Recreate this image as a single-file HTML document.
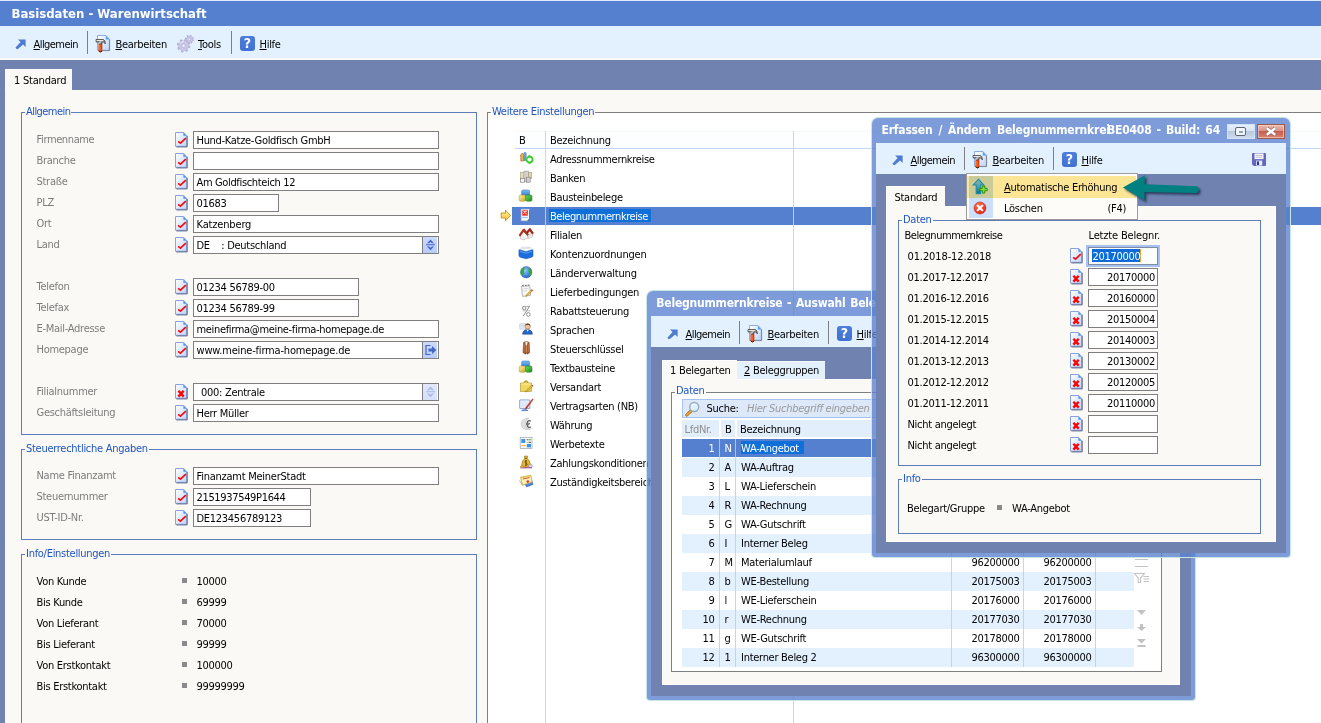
<!DOCTYPE html>
<html lang="de"><head><meta charset="utf-8"><title>Basisdaten - Warenwirtschaft</title>
<style>
html,body{margin:0;padding:0}body{width:1321px;height:723px;overflow:hidden;position:relative;background:#FAF9F5;font:11px/13px "DejaVu Sans Condensed","Liberation Sans",sans-serif;color:#000}
#w{position:absolute;left:0;top:0;width:1321px;height:723px;overflow:hidden;will-change:transform}
#w>div,#w>span,#w>svg{position:absolute}
.t{font:11px/13px "DejaVu Sans Condensed","Liberation Sans",sans-serif;letter-spacing:-0.28px;white-space:pre}
.tt{font:bold 13px/16px "DejaVu Sans Condensed","Liberation Sans",sans-serif;color:#fff;white-space:pre}
.td{font:bold 12px/16px "DejaVu Sans Condensed","Liberation Sans",sans-serif;color:#fff;white-space:pre;letter-spacing:-0.2px}
u{text-decoration:underline;text-underline-offset:1px}
.hlp{width:15px;height:15px;border-radius:3px;background:linear-gradient(#4D7DDB,#4171D2);color:#fff;font:bold 14px/15px "DejaVu Sans Condensed","Liberation Sans",sans-serif;text-align:center}
</style></head>
<body>
<div id="w">
<svg width="0" height="0" style="position:absolute"><defs><linearGradient id="dg2" x1="0" y1="0" x2="1" y2="1"><stop offset="0" stop-color="#FFFFFF"/><stop offset="1" stop-color="#BFD4F8"/></linearGradient></defs></svg>
<div style="left:0px;top:0px;width:1321px;height:26px;background:#5580D0;"></div>
<div style="left:0px;top:0px;width:1321px;height:1px;background:#DCEAFB;"></div>
<span class="tt" style="left:11.5px;top:6px;">Basisdaten - Warenwirtschaft</span>
<div style="left:0px;top:26px;width:1321px;height:34px;background:#E3F1FF;"></div>
<div style="left:0px;top:58px;width:1321px;height:2px;background:#FBFAF7;"></div>
<div style="left:0px;top:60px;width:1321px;height:30px;background:#7083B0;"></div>
<div style="left:0px;top:90px;width:5px;height:634px;background:#7083B0;"></div>
<svg style="left:15px;top:39px;" width="11" height="10" viewBox="0 0 11 10"><path d="M3 0.400H10.600V8L8.100 5.500L2.200 10.600L0.400 8.800L5.600 3Z" fill="#4F7BD0"/></svg>
<span class="t" style="left:33.5px;top:38px;letter-spacing:-0.56px;"><u>A</u>llgemein</span>
<div style="left:87px;top:31px;width:1px;height:23px;background:#7F7F7F;"></div>
<svg style="left:95px;top:35px;" width="16" height="18" viewBox="0 0 16 18"><path d="M2.500 0.500H11L14.400 4.300V15.300H2.500Z" fill="url(#dg2)" stroke="#86A2E0" stroke-width=".9"/><path d="M14.600 4.500V15.600H3" fill="none" stroke="#7F7F86" stroke-width=".9"/><path d="M10.800 0.700V4.500H14.400Z" fill="#4FA2F2"/>
<path d="M1.100 4.500H8.200Q10.300 4.800 10.300 8.800Q9.300 7 8.300 6.900H6.900V9H4.200V6.900H1.100Z" fill="#B4B4B4" stroke="#2E2E2E" stroke-width=".8" stroke-linejoin="round"/><path d="M1.600 5.400H8" stroke="#F4F4F4" stroke-width=".9"/><path d="M4.600 7V9" stroke="#E8E8E8" stroke-width=".8"/>
<path d="M3.900 9.200H7V16.300Q5.500 17.600 3.900 16.300Z" fill="#F0480E" stroke="#A02808" stroke-width=".6"/><path d="M4.900 10V15.500" stroke="#FFA040" stroke-width=".8"/><path d="M4 16.300Q5.500 17.500 7 16.300" stroke="#3A1A10" stroke-width=".9" fill="none"/></svg>
<span class="t" style="left:115.5px;top:38px;letter-spacing:-0.3px;"><u>B</u>earbeiten</span>
<svg style="left:176px;top:34px;" width="18" height="20" viewBox="0 0 18 20"><g fill="#C9C7E6"><circle cx="13.500" cy="5.400" r="3.700" fill="none" stroke="#B4B0D8" stroke-width="1.800" stroke-dasharray="1.450 1.450"/><circle cx="13.500" cy="5.400" r="3.200" stroke="#B0ACD4" stroke-width=".5"/><circle cx="7.600" cy="11.700" r="5.700" fill="none" stroke="#B4B0D8" stroke-width="2.200" stroke-dasharray="2.240 2.240"/><circle cx="7.600" cy="11.700" r="5" stroke="#B0ACD4" stroke-width=".5"/></g><circle cx="7.600" cy="11.700" r="1.700" fill="#F2F2FC" stroke="#A8A4CC" stroke-width=".6"/><circle cx="13.500" cy="5.400" r="1.100" fill="#F2F2FC" stroke="#A8A4CC" stroke-width=".5"/><path d="M4 9.500Q5.500 7.500 8 7.600" stroke="#EEEEFA" stroke-width="1" fill="none"/></svg>
<span class="t" style="left:198px;top:38px;"><u>T</u>ools</span>
<div style="left:231px;top:31px;width:1px;height:23px;background:#7F7F7F;"></div>
<div class="hlp" style="left:240px;top:36px">?</div>
<span class="t" style="left:259.5px;top:38px;"><u>H</u>ilfe</span>
<div style="left:5px;top:69px;width:67px;height:22px;background:#FAF9F5;border-left:1px solid #fff;border-top:1px solid #fff;box-sizing:border-box;"></div>
<span class="t" style="left:14px;top:74px;letter-spacing:-0.21px;">1 Standard</span>
<div style="left:21px;top:112px;width:456px;height:323px;border:1px solid #5F7CBA;box-sizing:border-box;"></div>
<span class="t" style="left:25px;top:105px;color:#1F55C2;letter-spacing:-0.56px;background:#FAF9F5;padding:0 1px;">Allgemein</span>
<div style="left:21px;top:449px;width:456px;height:91px;border:1px solid #5F7CBA;box-sizing:border-box;"></div>
<span class="t" style="left:25px;top:442px;color:#1F55C2;background:#FAF9F5;padding:0 1px;">Steuerrechtliche Angaben</span>
<div style="left:21px;top:554px;width:456px;height:187px;border:1px solid #5F7CBA;box-sizing:border-box;"></div>
<span class="t" style="left:25px;top:547px;color:#1F55C2;background:#FAF9F5;padding:0 1px;">Info/Einstellungen</span>
<span class="t" style="left:36.5px;top:133px;color:#7C7C7C;letter-spacing:-0.38px;">Firmenname</span>
<svg style="left:175px;top:132px;" width="14" height="16" viewBox="0 0 14 16"><path d="M0.500 0.500H8.700L11.600 3.400V14.300H0.500Z" fill="url(#dg2)" stroke="#8AA2DE"/><path d="M12.200 3.800V14.900H1.400" fill="none" stroke="#5C6890" stroke-width="1"/><path d="M8.400 0.600V3.800H11.600Z" fill="#4C96EA"/><path d="M3.100 9.300L5.500 11.200L10.800 6.100" fill="none" stroke="#F80C0C" stroke-width="1.700"/></svg>
<div style="left:193px;top:131px;width:246px;height:18px;background:#fff;border:1px solid #7F7F7F;box-sizing:border-box;"></div>
<span class="t" style="left:196.5px;top:134px;letter-spacing:-0.3px;">Hund-Katze-Goldfisch GmbH</span>
<span class="t" style="left:36.5px;top:154px;color:#7C7C7C;">Branche</span>
<svg style="left:175px;top:153px;" width="14" height="16" viewBox="0 0 14 16"><path d="M0.500 0.500H8.700L11.600 3.400V14.300H0.500Z" fill="url(#dg2)" stroke="#8AA2DE"/><path d="M12.200 3.800V14.900H1.400" fill="none" stroke="#5C6890" stroke-width="1"/><path d="M8.400 0.600V3.800H11.600Z" fill="#4C96EA"/><path d="M3.100 9.300L5.500 11.200L10.800 6.100" fill="none" stroke="#F80C0C" stroke-width="1.700"/></svg>
<div style="left:193px;top:152px;width:246px;height:18px;background:#fff;border:1px solid #7F7F7F;box-sizing:border-box;"></div>
<span class="t" style="left:36.5px;top:175px;color:#7C7C7C;">Straße</span>
<svg style="left:175px;top:174px;" width="14" height="16" viewBox="0 0 14 16"><path d="M0.500 0.500H8.700L11.600 3.400V14.300H0.500Z" fill="url(#dg2)" stroke="#8AA2DE"/><path d="M12.200 3.800V14.900H1.400" fill="none" stroke="#5C6890" stroke-width="1"/><path d="M8.400 0.600V3.800H11.600Z" fill="#4C96EA"/><path d="M3.100 9.300L5.500 11.200L10.800 6.100" fill="none" stroke="#F80C0C" stroke-width="1.700"/></svg>
<div style="left:193px;top:173px;width:246px;height:18px;background:#fff;border:1px solid #7F7F7F;box-sizing:border-box;"></div>
<span class="t" style="left:196.5px;top:176px;letter-spacing:-0.35px;">Am Goldfischteich 12</span>
<span class="t" style="left:36.5px;top:196px;color:#7C7C7C;">PLZ</span>
<svg style="left:175px;top:195px;" width="14" height="16" viewBox="0 0 14 16"><path d="M0.500 0.500H8.700L11.600 3.400V14.300H0.500Z" fill="url(#dg2)" stroke="#8AA2DE"/><path d="M12.200 3.800V14.900H1.400" fill="none" stroke="#5C6890" stroke-width="1"/><path d="M8.400 0.600V3.800H11.600Z" fill="#4C96EA"/><path d="M3.100 9.300L5.500 11.200L10.800 6.100" fill="none" stroke="#F80C0C" stroke-width="1.700"/></svg>
<div style="left:193px;top:194px;width:86px;height:18px;background:#fff;border:1px solid #7F7F7F;box-sizing:border-box;"></div>
<span class="t" style="left:196.5px;top:197px;">01683</span>
<span class="t" style="left:36.5px;top:217px;color:#7C7C7C;">Ort</span>
<svg style="left:175px;top:216px;" width="14" height="16" viewBox="0 0 14 16"><path d="M0.500 0.500H8.700L11.600 3.400V14.300H0.500Z" fill="url(#dg2)" stroke="#8AA2DE"/><path d="M12.200 3.800V14.900H1.400" fill="none" stroke="#5C6890" stroke-width="1"/><path d="M8.400 0.600V3.800H11.600Z" fill="#4C96EA"/><path d="M3.100 9.300L5.500 11.200L10.800 6.100" fill="none" stroke="#F80C0C" stroke-width="1.700"/></svg>
<div style="left:193px;top:215px;width:246px;height:18px;background:#fff;border:1px solid #7F7F7F;box-sizing:border-box;"></div>
<span class="t" style="left:196.5px;top:218px;letter-spacing:-0.16px;">Katzenberg</span>
<span class="t" style="left:36.5px;top:238px;color:#7C7C7C;">Land</span>
<svg style="left:175px;top:237px;" width="14" height="16" viewBox="0 0 14 16"><path d="M0.500 0.500H8.700L11.600 3.400V14.300H0.500Z" fill="url(#dg2)" stroke="#8AA2DE"/><path d="M12.200 3.800V14.900H1.400" fill="none" stroke="#5C6890" stroke-width="1"/><path d="M8.400 0.600V3.800H11.600Z" fill="#4C96EA"/><path d="M3.100 9.300L5.500 11.200L10.800 6.100" fill="none" stroke="#F80C0C" stroke-width="1.700"/></svg>
<div style="left:193px;top:236px;width:246px;height:18px;background:#fff;border:1px solid #7F7F7F;box-sizing:border-box;"></div>
<span class="t" style="left:196.5px;top:239px;">DE    : Deutschland</span>
<span class="t" style="left:36.5px;top:280px;color:#7C7C7C;">Telefon</span>
<svg style="left:175px;top:279px;" width="14" height="16" viewBox="0 0 14 16"><path d="M0.500 0.500H8.700L11.600 3.400V14.300H0.500Z" fill="url(#dg2)" stroke="#8AA2DE"/><path d="M12.200 3.800V14.900H1.400" fill="none" stroke="#5C6890" stroke-width="1"/><path d="M8.400 0.600V3.800H11.600Z" fill="#4C96EA"/><path d="M3.100 9.300L5.500 11.200L10.800 6.100" fill="none" stroke="#F80C0C" stroke-width="1.700"/></svg>
<div style="left:193px;top:278px;width:166px;height:18px;background:#fff;border:1px solid #7F7F7F;box-sizing:border-box;"></div>
<span class="t" style="left:196.5px;top:281px;">01234 56789-00</span>
<span class="t" style="left:36.5px;top:301px;color:#7C7C7C;">Telefax</span>
<svg style="left:175px;top:300px;" width="14" height="16" viewBox="0 0 14 16"><path d="M0.500 0.500H8.700L11.600 3.400V14.300H0.500Z" fill="url(#dg2)" stroke="#8AA2DE"/><path d="M12.200 3.800V14.900H1.400" fill="none" stroke="#5C6890" stroke-width="1"/><path d="M8.400 0.600V3.800H11.600Z" fill="#4C96EA"/><path d="M3.100 9.300L5.500 11.200L10.800 6.100" fill="none" stroke="#F80C0C" stroke-width="1.700"/></svg>
<div style="left:193px;top:299px;width:166px;height:18px;background:#fff;border:1px solid #7F7F7F;box-sizing:border-box;"></div>
<span class="t" style="left:196.5px;top:302px;">01234 56789-99</span>
<span class="t" style="left:36.5px;top:322px;color:#7C7C7C;">E-Mail-Adresse</span>
<svg style="left:175px;top:321px;" width="14" height="16" viewBox="0 0 14 16"><path d="M0.500 0.500H8.700L11.600 3.400V14.300H0.500Z" fill="url(#dg2)" stroke="#8AA2DE"/><path d="M12.200 3.800V14.900H1.400" fill="none" stroke="#5C6890" stroke-width="1"/><path d="M8.400 0.600V3.800H11.600Z" fill="#4C96EA"/><path d="M3.100 9.300L5.500 11.200L10.800 6.100" fill="none" stroke="#F80C0C" stroke-width="1.700"/></svg>
<div style="left:193px;top:320px;width:246px;height:18px;background:#fff;border:1px solid #7F7F7F;box-sizing:border-box;"></div>
<span class="t" style="left:196.5px;top:323px;letter-spacing:-0.33px;">meinefirma@meine-firma-homepage.de</span>
<span class="t" style="left:36.5px;top:343px;color:#7C7C7C;">Homepage</span>
<svg style="left:175px;top:342px;" width="14" height="16" viewBox="0 0 14 16"><path d="M0.500 0.500H8.700L11.600 3.400V14.300H0.500Z" fill="url(#dg2)" stroke="#8AA2DE"/><path d="M12.200 3.800V14.900H1.400" fill="none" stroke="#5C6890" stroke-width="1"/><path d="M8.400 0.600V3.800H11.600Z" fill="#4C96EA"/><path d="M3.100 9.300L5.500 11.200L10.800 6.100" fill="none" stroke="#F80C0C" stroke-width="1.700"/></svg>
<div style="left:193px;top:341px;width:246px;height:18px;background:#fff;border:1px solid #7F7F7F;box-sizing:border-box;"></div>
<span class="t" style="left:196.5px;top:344px;letter-spacing:-0.18px;">www.meine-firma-homepage.de</span>
<span class="t" style="left:36.5px;top:385px;color:#7C7C7C;">Filialnummer</span>
<svg style="left:175px;top:384px;" width="14" height="16" viewBox="0 0 14 16"><path d="M0.500 0.500H8.700L11.600 3.400V14.300H0.500Z" fill="url(#dg2)" stroke="#8AA2DE"/><path d="M12.200 3.800V14.900H1.400" fill="none" stroke="#5C6890" stroke-width="1"/><path d="M8.400 0.600V3.800H11.600Z" fill="#4C96EA"/><path d="M3.400 6.700L8.700 12.600M8.700 6.700L3.400 12.600" fill="none" stroke="#FA0606" stroke-width="2.400"/></svg>
<div style="left:193px;top:383px;width:246px;height:18px;background:#fff;border:1px solid #7F7F7F;box-sizing:border-box;"></div>
<span class="t" style="left:201.0px;top:386px;">000: Zentrale</span>
<span class="t" style="left:36.5px;top:406px;color:#7C7C7C;">Geschäftsleitung</span>
<svg style="left:175px;top:405px;" width="14" height="16" viewBox="0 0 14 16"><path d="M0.500 0.500H8.700L11.600 3.400V14.300H0.500Z" fill="url(#dg2)" stroke="#8AA2DE"/><path d="M12.200 3.800V14.900H1.400" fill="none" stroke="#5C6890" stroke-width="1"/><path d="M8.400 0.600V3.800H11.600Z" fill="#4C96EA"/><path d="M3.100 9.300L5.500 11.200L10.800 6.100" fill="none" stroke="#F80C0C" stroke-width="1.700"/></svg>
<div style="left:193px;top:404px;width:246px;height:18px;background:#fff;border:1px solid #7F7F7F;box-sizing:border-box;"></div>
<span class="t" style="left:196.5px;top:407px;">Herr Müller</span>
<span class="t" style="left:36.5px;top:469px;color:#7C7C7C;">Name Finanzamt</span>
<svg style="left:175px;top:468px;" width="14" height="16" viewBox="0 0 14 16"><path d="M0.500 0.500H8.700L11.600 3.400V14.300H0.500Z" fill="url(#dg2)" stroke="#8AA2DE"/><path d="M12.200 3.800V14.900H1.400" fill="none" stroke="#5C6890" stroke-width="1"/><path d="M8.400 0.600V3.800H11.600Z" fill="#4C96EA"/><path d="M3.100 9.300L5.500 11.200L10.800 6.100" fill="none" stroke="#F80C0C" stroke-width="1.700"/></svg>
<div style="left:193px;top:467px;width:246px;height:18px;background:#fff;border:1px solid #7F7F7F;box-sizing:border-box;"></div>
<span class="t" style="left:196.5px;top:470px;letter-spacing:-0.25px;">Finanzamt MeinerStadt</span>
<span class="t" style="left:36.5px;top:490px;color:#7C7C7C;">Steuernummer</span>
<svg style="left:175px;top:489px;" width="14" height="16" viewBox="0 0 14 16"><path d="M0.500 0.500H8.700L11.600 3.400V14.300H0.500Z" fill="url(#dg2)" stroke="#8AA2DE"/><path d="M12.200 3.800V14.900H1.400" fill="none" stroke="#5C6890" stroke-width="1"/><path d="M8.400 0.600V3.800H11.600Z" fill="#4C96EA"/><path d="M3.100 9.300L5.500 11.200L10.800 6.100" fill="none" stroke="#F80C0C" stroke-width="1.700"/></svg>
<div style="left:193px;top:488px;width:118px;height:18px;background:#fff;border:1px solid #7F7F7F;box-sizing:border-box;"></div>
<span class="t" style="left:196.5px;top:491px;letter-spacing:-0.34px;">2151937549P1644</span>
<span class="t" style="left:36.5px;top:511px;color:#7C7C7C;">UST-ID-Nr.</span>
<svg style="left:175px;top:510px;" width="14" height="16" viewBox="0 0 14 16"><path d="M0.500 0.500H8.700L11.600 3.400V14.300H0.500Z" fill="url(#dg2)" stroke="#8AA2DE"/><path d="M12.200 3.800V14.900H1.400" fill="none" stroke="#5C6890" stroke-width="1"/><path d="M8.400 0.600V3.800H11.600Z" fill="#4C96EA"/><path d="M3.100 9.300L5.500 11.200L10.800 6.100" fill="none" stroke="#F80C0C" stroke-width="1.700"/></svg>
<div style="left:193px;top:509px;width:118px;height:18px;background:#fff;border:1px solid #7F7F7F;box-sizing:border-box;"></div>
<span class="t" style="left:196.5px;top:512px;">DE123456789123</span>
<div style="left:422px;top:237px;width:1px;height:16px;background:#7F7F7F;"></div>
<div style="left:423px;top:237px;width:14px;height:16px;background:linear-gradient(#CBD9FC,#B9CCF8);"></div>
<svg style="left:425px;top:239px;" width="11" height="12" viewBox="0 0 11 12"><path d="M5.500 0.600L9 4.300H6.800L5.500 2.900L4.200 4.300H2Z M1 5.300H10V6.300H1Z M5.500 11.200L9 7.400H6.800L5.500 8.800L4.200 7.400H2Z" fill="#4468C8"/></svg>
<div style="left:422px;top:384px;width:1px;height:16px;background:#7F7F7F;"></div>
<div style="left:423px;top:384px;width:14px;height:16px;background:linear-gradient(#E2E9FD,#D6E0FB);"></div>
<svg style="left:425px;top:386px;" width="11" height="12" viewBox="0 0 11 12"><path d="M5.500 0.600L9 4.300H6.800L5.500 2.900L4.200 4.300H2Z M1 5.300H10V6.300H1Z M5.500 11.200L9 7.400H6.800L5.500 8.800L4.200 7.400H2Z" fill="#A9B9EA"/></svg>
<div style="left:422px;top:342px;width:1px;height:16px;background:#7F7F7F;"></div>
<div style="left:423px;top:342px;width:14px;height:16px;background:linear-gradient(#CBD9FC,#B9CCF8);"></div>
<svg style="left:425px;top:345px;" width="12" height="10" viewBox="0 0 12 10"><path d="M5.500 0.500H1V9.500H5.500" fill="none" stroke="#4468C8" stroke-width="1.200"/><path d="M3.500 3.600H7V1L11.300 5L7 9V6.400H3.500Z" fill="#4468C8"/></svg>
<span class="t" style="left:36.5px;top:575px;">Von Kunde</span>
<div style="left:182px;top:578px;width:5px;height:5px;background:#8A8A8A;"></div>
<span class="t" style="left:196.5px;top:575px;">10000</span>
<span class="t" style="left:36.5px;top:596px;">Bis Kunde</span>
<div style="left:182px;top:599px;width:5px;height:5px;background:#8A8A8A;"></div>
<span class="t" style="left:196.5px;top:596px;">69999</span>
<span class="t" style="left:36.5px;top:617px;">Von Lieferant</span>
<div style="left:182px;top:620px;width:5px;height:5px;background:#8A8A8A;"></div>
<span class="t" style="left:196.5px;top:617px;">70000</span>
<span class="t" style="left:36.5px;top:638px;">Bis Lieferant</span>
<div style="left:182px;top:641px;width:5px;height:5px;background:#8A8A8A;"></div>
<span class="t" style="left:196.5px;top:638px;">99999</span>
<span class="t" style="left:36.5px;top:659px;">Von Erstkontakt</span>
<div style="left:182px;top:662px;width:5px;height:5px;background:#8A8A8A;"></div>
<span class="t" style="left:196.5px;top:659px;">100000</span>
<span class="t" style="left:36.5px;top:680px;">Bis Erstkontakt</span>
<div style="left:182px;top:683px;width:5px;height:5px;background:#8A8A8A;"></div>
<span class="t" style="left:196.5px;top:680px;">99999999</span>
<div style="left:488px;top:113px;width:840px;height:620px;background:#fff;"></div>
<div style="left:487px;top:112px;width:840px;height:1px;background:#7F7F7F;"></div>
<div style="left:487px;top:112px;width:1px;height:620px;background:#7F7F7F;"></div>
<span class="t" style="left:491px;top:105px;color:#1F55C2;background:#FAF9F5;padding:0 1px;">Weitere Einstellungen</span>
<div style="left:515px;top:131px;width:806px;height:17px;background:#FDFEFF;"></div>
<div style="left:515px;top:131px;width:806px;height:1px;background:#FAF8F2;"></div>
<div style="left:515px;top:148px;width:806px;height:1px;background:#C3D6F8;"></div>
<div style="left:545px;top:131px;width:1px;height:600px;background:#C3D6F8;"></div>
<div style="left:793px;top:131px;width:1px;height:600px;background:#C3D6F8;"></div>
<span class="t" style="left:519px;top:134px;">B</span>
<span class="t" style="left:550px;top:134px;">Bezeichnung</span>
<span class="t" style="left:550px;top:153px;letter-spacing:-0.33px;">Adressnummernkreise</span>
<svg style="left:518px;top:150px;overflow:visible;" width="16" height="19" viewBox="0 0 16 19"><path d="M6.800 2.200Q8.200 2.200 8.200 4V10.500H5.800V4Q5.800 2.200 6.800 2.200Z" fill="#6AA8F0" stroke="#3A70C8" stroke-width=".5"/><path d="M4.200 3L6.400 6H5.600V11H2.800V6H2Z" fill="#F0B040" stroke="#9A6A18" stroke-width=".6"/><circle cx="11.500" cy="9.600" r="3" fill="#F4FFF0" stroke="#30D028" stroke-width="1.700"/><path d="M10.500 4.800L13.800 6.200L10.800 8Z" fill="#30D028"/><path d="M12.600 14.200L9.400 13L12.200 11.200Z" fill="#30D028"/></svg>
<span class="t" style="left:550px;top:172px;">Banken</span>
<svg style="left:518px;top:169px;overflow:visible;" width="16" height="19" viewBox="0 0 16 19"><rect x="2.600" y="3.600" width="3.600" height="7" fill="#E8DCA8" stroke="#9A9078" stroke-width=".5"/><rect x="10" y="3.600" width="3.800" height="6" fill="#E4D8A0" stroke="#9A9078" stroke-width=".5"/><rect x="6" y="2.200" width="4.200" height="10.600" fill="#E8E8E4" stroke="#808080" stroke-width=".6"/><path d="M7.400 3V12M8.800 3V12" stroke="#B8B8B4" stroke-width=".6"/><rect x="2.600" y="9.600" width="4" height="3.600" fill="#F8F8F8" stroke="#707070" stroke-width=".6"/><rect x="8.600" y="8.200" width="3.600" height="5" fill="#D0D0CC" stroke="#808080" stroke-width=".6"/></svg>
<span class="t" style="left:550px;top:191px;letter-spacing:-0.3px;">Bausteinbelege</span>
<svg style="left:518px;top:188px;overflow:visible;" width="16" height="19" viewBox="0 0 16 19"><defs><linearGradient id="bb" x1="0" y1="0" x2="0" y2="1"><stop offset="0" stop-color="#7CC0F4"/><stop offset="1" stop-color="#2470C8"/></linearGradient><linearGradient id="by" x1="0" y1="0" x2="1" y2="1"><stop offset="0" stop-color="#FFF4A0"/><stop offset="1" stop-color="#C8A428"/></linearGradient><linearGradient id="bg" x1="0" y1="0" x2="1" y2="1"><stop offset="0" stop-color="#70D860"/><stop offset="1" stop-color="#1C8A20"/></linearGradient></defs><rect x="3.600" y="2" width="8" height="6.500" rx="1.500" fill="url(#bb)" stroke="#2A68B8" stroke-width=".5"/><rect x="1.200" y="7" width="6.600" height="6.200" rx="1.400" fill="url(#by)" stroke="#A88A28" stroke-width=".5"/><rect x="7.600" y="7" width="6.400" height="6.200" rx="1.400" fill="url(#bg)" stroke="#1C7A20" stroke-width=".5"/></svg>
<div style="left:512px;top:207px;width:809px;height:18px;background:#5580D0;"></div>
<div style="left:545px;top:207px;width:1px;height:18px;background:#B4CBF6;"></div>
<div style="left:793px;top:207px;width:1px;height:18px;background:#B4CBF6;"></div>
<div style="left:549px;top:209px;width:102px;height:13px;background:#0F70DA;"></div>
<span class="t" style="left:550px;top:210px;color:#fff;letter-spacing:-0.43px;">Belegnummernkreise</span>
<svg style="left:500px;top:209px;" width="12" height="13" viewBox="0 0 12 13"><defs><linearGradient id="ya" x1="0" y1="0" x2="0" y2="1"><stop offset="0" stop-color="#FFF2A0"/><stop offset="1" stop-color="#F2C23C"/></linearGradient></defs><path d="M5.500 1.200L10.600 6.500L5.500 11.800V9H1.200V4H5.500Z" fill="url(#ya)" stroke="#C8961E" stroke-width="1"/></svg>
<svg style="left:518px;top:207px;overflow:visible;" width="16" height="19" viewBox="0 0 16 19"><path d="M3.200 2.200H11.400V11.800L9.400 13.800H3.200Z" fill="#FCFCFC" stroke="#B8C0D0" stroke-width=".6"/><path d="M11.600 3V12L9.600 14" fill="none" stroke="#50586A" stroke-width=".8"/><rect x="4.300" y="3.300" width="5.600" height="5.400" fill="#E8301C"/><path d="M5.400 4.600H8.800M5.400 6.600L7 5.400L8.800 7.400" stroke="#FCE8E4" stroke-width=".9" fill="none"/><rect x="4.300" y="9.800" width="5.600" height="1.300" fill="#9CC4F0"/></svg>
<span class="t" style="left:550px;top:229px;">Filialen</span>
<svg style="left:518px;top:226px;overflow:visible;" width="16" height="19" viewBox="0 0 16 19"><path d="M10.200 8.200L14.400 7.400V11L10.200 12.800Z" fill="#EEE8E2" stroke="#A89890" stroke-width=".4"/><path d="M7.600 7L11.200 2.600L12.400 2.400L15.600 7L14.400 8.200L11.600 5L9 8.200Z" fill="#A82818" stroke="#701408" stroke-width=".4"/><path d="M2.400 9L5.600 5.600L9.400 8.800V12.400L5.200 13.800L2.400 12.400Z" fill="#FAF8F6" stroke="#A89890" stroke-width=".5"/><path d="M0.900 9.200L4.800 3.400L6.400 2.800L10.600 8.400L9.400 9.600L5.600 5.600L2.200 10.200Z" fill="#B42C1C" stroke="#701408" stroke-width=".4"/><path d="M5.200 9.600V13.600" stroke="#C8BCB4" stroke-width=".5"/></svg>
<span class="t" style="left:550px;top:248px;letter-spacing:-0.18px;">Kontenzuordnungen</span>
<svg style="left:518px;top:245px;overflow:visible;" width="16" height="19" viewBox="0 0 16 19"><path d="M2.400 3.400L5 2.200L12.400 2.400L13.800 4.800L8 6.400L1.800 5Z" fill="#FCFCFC" stroke="#A8B4C8" stroke-width=".5"/><path d="M4 3.600L11.500 3.400" stroke="#C8D0DC" stroke-width=".6"/><path d="M0.900 5Q0.900 4.600 1.600 4.800L8 6.800L14.400 4.800Q15 4.600 15 5.200V10.400Q15 11.600 13.800 12.200L9 13.600Q8 13.800 7 13.600L2.200 12.200Q0.900 11.600 0.900 10.400Z" fill="#1C6CDC" stroke="#1450B0" stroke-width=".5"/><path d="M1.600 6.200L8 8.200L14.300 6.200" stroke="#6CB0F8" stroke-width=".8" fill="none"/></svg>
<span class="t" style="left:550px;top:267px;letter-spacing:-0.2px;">Länderverwaltung</span>
<svg style="left:518px;top:264px;overflow:visible;" width="16" height="19" viewBox="0 0 16 19"><defs><radialGradient id="gl" cx=".4" cy=".35" r=".7"><stop offset="0" stop-color="#8CC8FC"/><stop offset="1" stop-color="#1C64C8"/></radialGradient></defs><circle cx="8.200" cy="8.200" r="5.700" fill="url(#gl)" stroke="#2A5AA8" stroke-width=".5"/><path d="M3 6.400Q4.200 3.800 6.400 3.200Q7 4.800 5.800 6.400Q6.600 8.400 5.200 10.600Q3.600 12 3.200 10.200Q2.400 8.400 3 6.400Z" fill="#38A828"/><path d="M10.600 3.400Q13 4.600 13.600 7.200Q13.800 10 12 12.200Q10.600 11 11.200 9Q10 7.400 10.800 5.600Z" fill="#38A828"/></svg>
<span class="t" style="left:550px;top:286px;letter-spacing:-0.24px;">Lieferbedingungen</span>
<svg style="left:518px;top:283px;overflow:visible;" width="16" height="19" viewBox="0 0 16 19"><path d="M3.400 3.400L11.800 2.800L12.600 12.400L4.600 13.400Z" fill="#F6F6F4" stroke="#8C8C94" stroke-width=".6"/><path d="M4.200 2.600L5.800 2.200M7 2.400L8.600 2.200M9.800 2.200L11.200 2" stroke="#606068" stroke-width="1"/><path d="M5.400 5.800L10.400 5.400M5.600 7.800L9 7.600" stroke="#C4C4CC" stroke-width=".6"/><path d="M13.800 6.400L14.800 7.400L9.400 12.800L7.800 13.400L8.400 11.800Z" fill="#F4C430" stroke="#8C6A18" stroke-width=".5"/><path d="M13.800 6.400L14.800 7.400L14 8.200L13 7.200Z" fill="#E03020"/></svg>
<span class="t" style="left:550px;top:305px;">Rabattsteuerung</span>
<svg style="left:518px;top:302px;overflow:visible;" width="16" height="19" viewBox="0 0 16 19"><g fill="none" stroke="#8C8C8C" stroke-width="1"><ellipse cx="6.200" cy="6" rx="1.700" ry="1.800"/><ellipse cx="10.400" cy="12.400" rx="1.800" ry="1.900"/><path d="M11.400 4.600L5.200 14.200"/><path d="M4.400 8.800H12.200" stroke="#ACACAC" stroke-width=".7"/><path d="M8.200 4.400H12" stroke-width=".8"/></g></svg>
<span class="t" style="left:550px;top:324px;">Sprachen</span>
<svg style="left:518px;top:321px;overflow:visible;" width="16" height="19" viewBox="0 0 16 19"><path d="M1.800 2.800H8.400V8H1.800Z" fill="#F0F4FA" stroke="#98A8C0" stroke-width=".5"/><path d="M2.800 4.400H7M2.800 6H6" stroke="#B8C4D8" stroke-width=".6"/><circle cx="9.600" cy="5.400" r="2.700" fill="#F0C8A0" stroke="#8C5A30" stroke-width=".5"/><path d="M6.900 5Q7.200 2.400 9.800 2.500Q12.400 2.700 12.300 5.200Q11 3.800 9.400 4.200Q7.800 3.800 6.900 5Z" fill="#7A4A20"/><path d="M4.600 13.200Q4.800 8.600 9.600 8.600Q14.200 8.600 14.400 13.200Z" fill="#2468C8" stroke="#143C88" stroke-width=".5"/><path d="M8.400 8.800L9.600 10.800L10.800 8.800Z" fill="#F4F4F4"/></svg>
<span class="t" style="left:550px;top:343px;">Steuerschlüssel</span>
<svg style="left:518px;top:340px;overflow:visible;" width="16" height="19" viewBox="0 0 16 19"><path d="M5.600 2.600L7 1.800H9.800L11.200 2.600L11.600 12.600L9.800 14H9L8.400 12.600L7.800 14H7L5 12.600Z" fill="#A85830" stroke="#6A3014" stroke-width=".5"/><path d="M7.200 2H9.600L9 5.400H7.800Z" fill="#F4F0EC"/><path d="M8.400 5.400V12.400" stroke="#E4A070" stroke-width=".7"/><path d="M6.200 4V12M10.600 4V12" stroke="#C88050" stroke-width=".6"/></svg>
<span class="t" style="left:550px;top:362px;">Textbausteine</span>
<svg style="left:518px;top:359px;overflow:visible;" width="16" height="19" viewBox="0 0 16 19"><rect x="3.600" y="2" width="8" height="6.500" rx="1.500" fill="url(#bb)" stroke="#2A68B8" stroke-width=".5"/><rect x="1.200" y="7" width="6.600" height="6.200" rx="1.400" fill="url(#by)" stroke="#A88A28" stroke-width=".5"/><rect x="7.600" y="7" width="6.400" height="6.200" rx="1.400" fill="url(#bg)" stroke="#1C7A20" stroke-width=".5"/></svg>
<span class="t" style="left:550px;top:381px;">Versandart</span>
<svg style="left:518px;top:378px;overflow:visible;" width="16" height="19" viewBox="0 0 16 19"><path d="M2.400 5H6Q6 2.600 8 2.600Q10 2.600 10 5H13.400V13.400H2.400Z" fill="#F0D860" stroke="#A08420" stroke-width=".6"/><path d="M6.800 5Q6.800 3.400 8 3.400Q9.200 3.400 9.200 5" fill="none" stroke="#A08420" stroke-width=".6"/><path d="M3 6H12.800" stroke="#FFF4B0" stroke-width=".8"/><path d="M14.600 8.400L9.200 13.400L7.400 14L8.200 12.400L13.600 7.400Z" fill="#F4C838" stroke="#8C6A18" stroke-width=".5"/><path d="M13.600 7.400L14.600 8.400L15.200 7.800L14.200 6.800Z" fill="#E03020"/></svg>
<span class="t" style="left:550px;top:400px;">Vertragsarten (NB)</span>
<svg style="left:518px;top:397px;overflow:visible;" width="16" height="19" viewBox="0 0 16 19"><path d="M1.800 3H11.800V11.400H1.800Z" fill="#DCE8FC" stroke="#5070B8" stroke-width=".7"/><path d="M2.600 3.800H11V10.600H2.600Z" fill="none" stroke="#F4F8FF" stroke-width=".6"/><path d="M4.600 11.600H9V13.200H4.600Z" fill="#8CA4D8"/><path d="M3.400 13.600H10.200" stroke="#5070B8" stroke-width=".9"/><path d="M14.600 1.800L15.200 2.600L9 11L7.400 12L8 10.200Z" fill="#E83020" stroke="#8C1810" stroke-width=".4"/></svg>
<span class="t" style="left:550px;top:419px;">Währung</span>
<svg style="left:518px;top:416px;overflow:visible;" width="16" height="19" viewBox="0 0 16 19"><path d="M10.800 2.200Q5.400 1.800 3.600 6Q2.400 10 5.400 12.600Q8.400 14.800 12.600 13Q9.600 13.200 8 11Q6.400 8 7.800 5Q8.800 3 10.800 2.200Z" fill="#E0E0E0" stroke="#B0B0B0" stroke-width=".5"/><path d="M12.800 5.200Q10.800 4 9.400 5.600Q8.400 8 9.400 10.400Q10.800 12 13 11M8.200 7.200H11.800M8.200 8.800H11.400" fill="none" stroke="#505058" stroke-width="1.100"/></svg>
<span class="t" style="left:550px;top:438px;">Werbetexte</span>
<svg style="left:518px;top:435px;overflow:visible;" width="16" height="19" viewBox="0 0 16 19"><rect x="2.200" y="2.300" width="11.800" height="11.200" fill="#FCFDFF" stroke="#90A0B8" stroke-width=".7"/><rect x="3.300" y="4" width="4" height="4" fill="#3C94EC"/><rect x="8.600" y="4.200" width="1.600" height="1.100" fill="#E03828"/><rect x="10.400" y="4.200" width="2.600" height="1.100" fill="#48B838"/><rect x="8.600" y="6.800" width="1.800" height="1.100" fill="#E8C030"/><rect x="10.600" y="6.800" width="2.400" height="1.100" fill="#505868"/><rect x="3.300" y="10" width="4.400" height="1.200" fill="#E8C030"/><rect x="8.800" y="9" width="4.200" height="3.400" fill="#3C94EC"/></svg>
<span class="t" style="left:550px;top:457px;">Zahlungskonditionen</span>
<svg style="left:518px;top:454px;overflow:visible;" width="16" height="19" viewBox="0 0 16 19"><path d="M6.200 2.200L9.600 2L9 4.400Q12.400 6.800 12.200 10.400Q12 13.400 8 13.400Q3.800 13.400 3.800 10.400Q3.800 6.800 6.800 4.400Z" fill="#E4B830" stroke="#8C6810" stroke-width=".6"/><path d="M6.600 4.400H9.200" stroke="#7A5A10" stroke-width="1"/><path d="M9 7Q7 6.400 7 8Q7 9 8 9.200Q9.200 9.400 9.200 10.400Q9 11.600 7 11M8 6V12.200" fill="none" stroke="#5A4008" stroke-width=".8"/><ellipse cx="12.400" cy="12" rx="2" ry="1.800" fill="#D8D8DC" stroke="#808088" stroke-width=".5"/><path d="M2.400 13.800H14" stroke="#A038A8" stroke-width="1"/><ellipse cx="4" cy="12.800" rx="1.800" ry="1" fill="#E4C040" stroke="#8C6810" stroke-width=".4"/></svg>
<span class="t" style="left:550px;top:476px;">Zuständigkeitsbereiche</span>
<svg style="left:518px;top:473px;overflow:visible;" width="16" height="19" viewBox="0 0 16 19"><path d="M6 9.600L13.800 7.600L15 11.400L8.600 14Z" fill="#4C88E0" stroke="#2450A8" stroke-width=".5"/><path d="M2.600 4.200L12.800 2.200L14.200 9.200L4.400 12.200Z" fill="#FBF0B8" stroke="#A8882C" stroke-width=".6"/><path d="M2.400 4.200L12.800 2.200L13 3.400L2.800 5.600Z" fill="#E8C858"/><path d="M4.800 6L11.600 4.600" stroke="#D84830" stroke-width=".9"/><circle cx="9.800" cy="8.600" r="1.300" fill="#E03828"/><path d="M1.400 7.400L4.400 12.200" stroke="#A8882C" stroke-width=".6"/></svg>
<div style="left:647px;top:291px;width:548px;height:409px;background:rgba(90,130,207,.79);border-radius:6px 6px 3px 3px;box-shadow:0 0 0 1px #C6E6E6;"></div>
<div style="left:651px;top:316px;width:540px;height:31px;background:#E3F1FF;"></div>
<div style="left:651px;top:347px;width:540px;height:349px;background:#7083B0;"></div>
<span class="td" style="left:656.3px;top:295px;word-spacing:1px;">Belegnummernkreise - Auswahl Belegart</span>
<svg style="left:667px;top:329px;" width="11" height="10" viewBox="0 0 11 10"><path d="M3 0.400H10.600V8L8.100 5.500L2.200 10.600L0.400 8.800L5.600 3Z" fill="#4F7BD0"/></svg>
<span class="t" style="left:685.5px;top:328px;letter-spacing:-0.56px;"><u>A</u>llgemein</span>
<div style="left:739px;top:321px;width:1px;height:23px;background:#7F7F7F;"></div>
<svg style="left:747px;top:325px;" width="16" height="18" viewBox="0 0 16 18"><path d="M2.500 0.500H11L14.400 4.300V15.300H2.500Z" fill="url(#dg2)" stroke="#86A2E0" stroke-width=".9"/><path d="M14.600 4.500V15.600H3" fill="none" stroke="#7F7F86" stroke-width=".9"/><path d="M10.800 0.700V4.500H14.400Z" fill="#4FA2F2"/>
<path d="M1.100 4.500H8.200Q10.300 4.800 10.300 8.800Q9.300 7 8.300 6.900H6.900V9H4.200V6.900H1.100Z" fill="#B4B4B4" stroke="#2E2E2E" stroke-width=".8" stroke-linejoin="round"/><path d="M1.600 5.400H8" stroke="#F4F4F4" stroke-width=".9"/><path d="M4.600 7V9" stroke="#E8E8E8" stroke-width=".8"/>
<path d="M3.900 9.200H7V16.300Q5.500 17.600 3.900 16.300Z" fill="#F0480E" stroke="#A02808" stroke-width=".6"/><path d="M4.900 10V15.500" stroke="#FFA040" stroke-width=".8"/><path d="M4 16.300Q5.500 17.500 7 16.300" stroke="#3A1A10" stroke-width=".9" fill="none"/></svg>
<span class="t" style="left:767.5px;top:328px;letter-spacing:-0.3px;"><u>B</u>earbeiten</span>
<div style="left:828px;top:321px;width:1px;height:23px;background:#7F7F7F;"></div>
<div class="hlp" style="left:837px;top:326px">?</div>
<span class="t" style="left:856.5px;top:328px;"><u>H</u>ilfe</span>
<div style="left:662px;top:379px;width:518px;height:306px;background:#FAF9F5;border:1px solid #fff;box-sizing:border-box;"></div>
<div style="left:662px;top:360px;width:75px;height:20px;background:#FAF9F5;border-left:1px solid #fff;border-top:1px solid #fff;box-sizing:border-box;"></div>
<span class="t" style="left:670px;top:364px;">1 Belegarten</span>
<div style="left:737px;top:361px;width:88px;height:18px;background:#E3F1FF;border-top:1px solid #F4F9FF;box-sizing:border-box;"></div>
<span class="t" style="left:744px;top:364px;"><u>2</u> Beleggruppen</span>
<div style="left:671px;top:392px;width:491px;height:280px;background:#fff;border:1px solid #7F7F7F;box-sizing:border-box;"></div>
<span class="t" style="left:675px;top:384px;color:#1F55C2;background:linear-gradient(#FAF9F5 8px,#fff 8px);padding:0 1px;">Daten</span>
<div style="left:682px;top:399px;width:452px;height:19px;background:#DDE8F8;border:1px solid #A6C2F0;box-sizing:border-box;"></div>
<svg style="left:685px;top:401px;" width="16" height="16" viewBox="0 0 16 16"><path d="M6.300 9.700L1.800 14" stroke="#8A5A1A" stroke-width="3" stroke-linecap="round"/><path d="M6.300 9.700L1.800 14" stroke="#F2A030" stroke-width="1.800" stroke-linecap="round"/><circle cx="9.200" cy="6" r="4.500" fill="#DDF2FF" stroke="#9AA8BC" stroke-width="1.400"/><path d="M6.800 4.500Q8.500 2.600 11 3.600" stroke="#fff" stroke-width="1.200" fill="none"/></svg>
<span class="t" style="left:706.5px;top:402px;">Suche:</span>
<span class="t" style="left:747px;top:402px;color:#9A9A9A;font-style:italic;">Hier Suchbegriff eingeben</span>
<div style="left:682px;top:420px;width:452px;height:17px;background:#E3EEFC;"></div>
<span class="t" style="left:684.5px;top:423px;color:#8E8E8E;">LfdNr.</span>
<span class="t" style="left:725px;top:423px;">B</span>
<span class="t" style="left:740px;top:423px;">Bezeichnung</span>
<div style="left:682px;top:439px;width:452px;height:18px;background:#5580D0;"></div>
<div style="left:741px;top:441px;width:63px;height:13px;background:#0F70DA;"></div>
<span class="t" style="left:684px;top:442px;width:30.5px;text-align:right;color:#fff;">1</span>
<span class="t" style="left:724.5px;top:442px;color:#fff;">N</span>
<span class="t" style="left:741px;top:442px;color:#fff;">WA-Angebot</span>
<span class="t" style="left:960px;top:442px;width:59.5px;text-align:right;color:#fff;">20170000</span>
<span class="t" style="left:1032px;top:442px;width:59.5px;text-align:right;color:#fff;">20170000</span>
<div style="left:682px;top:458px;width:452px;height:19px;background:#E3F1FF;"></div>
<span class="t" style="left:684px;top:461px;width:30.5px;text-align:right;">2</span>
<span class="t" style="left:724.5px;top:461px;">A</span>
<span class="t" style="left:741px;top:461px;">WA-Auftrag</span>
<span class="t" style="left:960px;top:461px;width:59.5px;text-align:right;">20171000</span>
<span class="t" style="left:1032px;top:461px;width:59.5px;text-align:right;">20171000</span>
<span class="t" style="left:684px;top:480px;width:30.5px;text-align:right;">3</span>
<span class="t" style="left:724.5px;top:480px;">L</span>
<span class="t" style="left:741px;top:480px;">WA-Lieferschein</span>
<span class="t" style="left:960px;top:480px;width:59.5px;text-align:right;">20172000</span>
<span class="t" style="left:1032px;top:480px;width:59.5px;text-align:right;">20172000</span>
<div style="left:682px;top:496px;width:452px;height:19px;background:#E3F1FF;"></div>
<span class="t" style="left:684px;top:499px;width:30.5px;text-align:right;">4</span>
<span class="t" style="left:724.5px;top:499px;">R</span>
<span class="t" style="left:741px;top:499px;">WA-Rechnung</span>
<span class="t" style="left:960px;top:499px;width:59.5px;text-align:right;">20173000</span>
<span class="t" style="left:1032px;top:499px;width:59.5px;text-align:right;">20173000</span>
<span class="t" style="left:684px;top:518px;width:30.5px;text-align:right;">5</span>
<span class="t" style="left:724.5px;top:518px;">G</span>
<span class="t" style="left:741px;top:518px;">WA-Gutschrift</span>
<span class="t" style="left:960px;top:518px;width:59.5px;text-align:right;">20174000</span>
<span class="t" style="left:1032px;top:518px;width:59.5px;text-align:right;">20174000</span>
<div style="left:682px;top:534px;width:452px;height:19px;background:#E3F1FF;"></div>
<span class="t" style="left:684px;top:537px;width:30.5px;text-align:right;">6</span>
<span class="t" style="left:724.5px;top:537px;">I</span>
<span class="t" style="left:741px;top:537px;">Interner Beleg</span>
<span class="t" style="left:960px;top:537px;width:59.5px;text-align:right;">96100000</span>
<span class="t" style="left:1032px;top:537px;width:59.5px;text-align:right;">96100000</span>
<span class="t" style="left:684px;top:556px;width:30.5px;text-align:right;">7</span>
<span class="t" style="left:724.5px;top:556px;">M</span>
<span class="t" style="left:741px;top:556px;">Materialumlauf</span>
<span class="t" style="left:960px;top:556px;width:59.5px;text-align:right;">96200000</span>
<span class="t" style="left:1032px;top:556px;width:59.5px;text-align:right;">96200000</span>
<div style="left:682px;top:572px;width:452px;height:19px;background:#E3F1FF;"></div>
<span class="t" style="left:684px;top:575px;width:30.5px;text-align:right;">8</span>
<span class="t" style="left:724.5px;top:575px;">b</span>
<span class="t" style="left:741px;top:575px;">WE-Bestellung</span>
<span class="t" style="left:960px;top:575px;width:59.5px;text-align:right;">20175003</span>
<span class="t" style="left:1032px;top:575px;width:59.5px;text-align:right;">20175003</span>
<span class="t" style="left:684px;top:594px;width:30.5px;text-align:right;">9</span>
<span class="t" style="left:724.5px;top:594px;">l</span>
<span class="t" style="left:741px;top:594px;">WE-Lieferschein</span>
<span class="t" style="left:960px;top:594px;width:59.5px;text-align:right;">20176000</span>
<span class="t" style="left:1032px;top:594px;width:59.5px;text-align:right;">20176000</span>
<div style="left:682px;top:610px;width:452px;height:19px;background:#E3F1FF;"></div>
<span class="t" style="left:684px;top:613px;width:30.5px;text-align:right;">10</span>
<span class="t" style="left:724.5px;top:613px;">r</span>
<span class="t" style="left:741px;top:613px;">WE-Rechnung</span>
<span class="t" style="left:960px;top:613px;width:59.5px;text-align:right;">20177030</span>
<span class="t" style="left:1032px;top:613px;width:59.5px;text-align:right;">20177030</span>
<span class="t" style="left:684px;top:632px;width:30.5px;text-align:right;">11</span>
<span class="t" style="left:724.5px;top:632px;">g</span>
<span class="t" style="left:741px;top:632px;">WE-Gutschrift</span>
<span class="t" style="left:960px;top:632px;width:59.5px;text-align:right;">20178000</span>
<span class="t" style="left:1032px;top:632px;width:59.5px;text-align:right;">20178000</span>
<div style="left:682px;top:648px;width:452px;height:19px;background:#E3F1FF;"></div>
<span class="t" style="left:684px;top:651px;width:30.5px;text-align:right;">12</span>
<span class="t" style="left:724.5px;top:651px;">1</span>
<span class="t" style="left:741px;top:651px;">Interner Beleg 2</span>
<span class="t" style="left:960px;top:651px;width:59.5px;text-align:right;">96300000</span>
<span class="t" style="left:1032px;top:651px;width:59.5px;text-align:right;">96300000</span>
<div style="left:719px;top:420px;width:2px;height:17px;background:#fff;"></div>
<div style="left:719px;top:439px;width:1px;height:228px;background:#B9CEF4;opacity:.85;"></div>
<div style="left:735px;top:420px;width:2px;height:17px;background:#fff;"></div>
<div style="left:735px;top:439px;width:1px;height:228px;background:#B9CEF4;opacity:.85;"></div>
<div style="left:951px;top:420px;width:2px;height:17px;background:#fff;"></div>
<div style="left:951px;top:439px;width:1px;height:228px;background:#B9CEF4;opacity:.85;"></div>
<div style="left:1023px;top:420px;width:2px;height:17px;background:#fff;"></div>
<div style="left:1023px;top:439px;width:1px;height:228px;background:#B9CEF4;opacity:.85;"></div>
<div style="left:1095px;top:420px;width:2px;height:17px;background:#fff;"></div>
<div style="left:1095px;top:439px;width:1px;height:228px;background:#B9CEF4;opacity:.85;"></div>
<svg style="left:1134px;top:556px;" width="18" height="95" viewBox="0 0 18 95"><g fill="#C2C2C2"><rect x="1" y="3" width="13" height="1"/><rect x="1" y="10" width="13" height="1"/>
<path d="M0.500 17.500H10.500L6.600 22V26.500H4.200V22Z" fill="none" stroke="#C2C2C2" stroke-width="1.100"/><rect x="9.500" y="20" width="5.500" height="1"/><rect x="9.500" y="22.500" width="5.500" height="1"/><rect x="9.500" y="25" width="5.500" height="1"/>
<path d="M3 54H12L7.500 59Z"/><path d="M6 68H9V71H12L7.500 75L3 71H6Z"/><path d="M3 83H12L7.500 87.500Z"/><rect x="3.500" y="89" width="8" height="2"/></g></svg>
<div style="left:872px;top:118px;width:418px;height:439px;background:rgba(90,130,207,.79);border-radius:6px 6px 3px 3px;box-shadow:0 0 0 1px #C6E6E6;"></div>
<div style="left:876px;top:143px;width:410px;height:31px;background:#E3F1FF;"></div>
<div style="left:876px;top:174px;width:410px;height:379px;background:#7083B0;"></div>
<div style="left:881px;top:121px;width:228px;height:18px;overflow:hidden"><span class="td" style="position:absolute;left:0.5px;top:1px;word-spacing:2.4px">Erfassen / Ändern Belegnummernkreise</span></div>
<span class="td" style="left:1107px;top:122px;word-spacing:1.6px;">BE0408 - Build: 64</span>
<div style="left:1227px;top:124px;width:28px;height:15px;background:linear-gradient(#E4EFFB 0%,#D6E4F5 46%,#B9C9DD 50%,#CBDAEC 100%);border:1px solid #D2E2F8;box-sizing:border-box;"></div>
<div style="left:1235px;top:127px;width:11px;height:9px;background:#F4F6FA;border:1.500px solid #5C667C;box-sizing:border-box;border-radius:2px;"></div>
<div style="left:1238.5px;top:130.5px;width:4px;height:2px;background:#8FA8BC;"></div>
<div style="left:1257px;top:124px;width:28px;height:15px;background:linear-gradient(#EBB8B0 0%,#DC9186 46%,#C75E4E 50%,#DA8474 100%);border:1px solid #9C5A4C;box-sizing:border-box;box-shadow:inset 0 0 0 1px rgba(255,225,215,.55);"></div>
<svg style="left:1264px;top:126px;" width="14" height="11" viewBox="0 0 14 11"><path d="M2.800 2.200L11.200 8.800M11.200 2.200L2.800 8.800" stroke="#8A6A66" stroke-width="3.800" stroke-linecap="butt"/><path d="M2.800 2.200L11.200 8.800M11.200 2.200L2.800 8.800" stroke="#fff" stroke-width="2.400" stroke-linecap="butt"/></svg>
<svg style="left:892px;top:155px;" width="11" height="10" viewBox="0 0 11 10"><path d="M3 0.400H10.600V8L8.100 5.500L2.200 10.600L0.400 8.800L5.600 3Z" fill="#4F7BD0"/></svg>
<span class="t" style="left:910.5px;top:154px;letter-spacing:-0.56px;"><u>A</u>llgemein</span>
<div style="left:964px;top:147px;width:1px;height:23px;background:#7F7F7F;"></div>
<svg style="left:972px;top:151px;" width="16" height="18" viewBox="0 0 16 18"><path d="M2.500 0.500H11L14.400 4.300V15.300H2.500Z" fill="url(#dg2)" stroke="#86A2E0" stroke-width=".9"/><path d="M14.600 4.500V15.600H3" fill="none" stroke="#7F7F86" stroke-width=".9"/><path d="M10.800 0.700V4.500H14.400Z" fill="#4FA2F2"/>
<path d="M1.100 4.500H8.200Q10.300 4.800 10.300 8.800Q9.300 7 8.300 6.900H6.900V9H4.200V6.900H1.100Z" fill="#B4B4B4" stroke="#2E2E2E" stroke-width=".8" stroke-linejoin="round"/><path d="M1.600 5.400H8" stroke="#F4F4F4" stroke-width=".9"/><path d="M4.600 7V9" stroke="#E8E8E8" stroke-width=".8"/>
<path d="M3.900 9.200H7V16.300Q5.500 17.600 3.900 16.300Z" fill="#F0480E" stroke="#A02808" stroke-width=".6"/><path d="M4.900 10V15.500" stroke="#FFA040" stroke-width=".8"/><path d="M4 16.300Q5.500 17.500 7 16.300" stroke="#3A1A10" stroke-width=".9" fill="none"/></svg>
<span class="t" style="left:992.5px;top:154px;letter-spacing:-0.3px;"><u>B</u>earbeiten</span>
<div style="left:1053px;top:147px;width:1px;height:23px;background:#7F7F7F;"></div>
<div class="hlp" style="left:1062px;top:152px">?</div>
<span class="t" style="left:1081.5px;top:154px;"><u>H</u>ilfe</span>
<svg style="left:1252px;top:153px;" width="14" height="13" viewBox="0 0 14 13"><path d="M0.500 0.500H13.500V12.500H1.800L0.500 11.200Z" fill="#6467C2" stroke="#5458B4" stroke-width=".8"/><rect x="2.500" y="0.500" width="9" height="5.600" fill="#FDFDFF"/><rect x="3.500" y="2" width="7" height=".9" fill="#B4B4C4"/><rect x="3.500" y="3.800" width="7" height=".9" fill="#B4B4C4"/><rect x="4.200" y="7.600" width="6" height="5" fill="#E8EAF4"/><rect x="5" y="8.400" width="2" height="3.600" fill="#2A3A9A"/></svg>
<div style="left:886px;top:206px;width:390px;height:336px;background:#FAF9F5;border:1px solid #fff;box-sizing:border-box;"></div>
<div style="left:886px;top:186px;width:59px;height:21px;background:#FAF9F5;border-left:1px solid #fff;border-top:1px solid #fff;box-sizing:border-box;"></div>
<span class="t" style="left:894.5px;top:191px;">Standard</span>
<div style="left:898px;top:220px;width:363px;height:246px;border:1px solid #5F7CBA;box-sizing:border-box;"></div>
<span class="t" style="left:902px;top:213px;color:#1F55C2;background:#FAF9F5;padding:0 1px;">Daten</span>
<div style="left:898px;top:479px;width:363px;height:55px;border:1px solid #5F7CBA;box-sizing:border-box;"></div>
<span class="t" style="left:902px;top:472px;color:#1F55C2;background:#FAF9F5;padding:0 1px;">Info</span>
<span class="t" style="left:904.5px;top:229px;letter-spacing:-0.43px;">Belegnummernkreise</span>
<span class="t" style="left:1088.5px;top:229px;letter-spacing:-0.17px;">Letzte Belegnr.</span>
<span class="t" style="left:907.5px;top:250px;letter-spacing:-0.11px;">01.2018-12.2018</span>
<svg style="left:1070px;top:248px;" width="14" height="16" viewBox="0 0 14 16"><path d="M0.500 0.500H8.700L11.600 3.400V14.300H0.500Z" fill="url(#dg2)" stroke="#8AA2DE"/><path d="M12.200 3.800V14.900H1.400" fill="none" stroke="#5C6890" stroke-width="1"/><path d="M8.400 0.600V3.800H11.600Z" fill="#4C96EA"/><path d="M3.100 9.300L5.500 11.200L10.800 6.100" fill="none" stroke="#F80C0C" stroke-width="1.700"/></svg>
<div style="left:1088px;top:247px;width:70px;height:18px;background:#fff;border:1px solid #7F8CA8;box-sizing:border-box;box-shadow:0 0 0 2px #A9C1F1;"></div>
<div style="left:1092px;top:249px;width:48px;height:13px;background:#0B6CD9;"></div>
<div style="left:1140px;top:249px;width:1px;height:13px;background:#F0A030;"></div>
<span class="t" style="left:1092.5px;top:250px;color:#fff;">20170000</span>
<span class="t" style="left:907.5px;top:271px;">01.2017-12.2017</span>
<svg style="left:1070px;top:269px;" width="14" height="16" viewBox="0 0 14 16"><path d="M0.500 0.500H8.700L11.600 3.400V14.300H0.500Z" fill="url(#dg2)" stroke="#8AA2DE"/><path d="M12.200 3.800V14.900H1.400" fill="none" stroke="#5C6890" stroke-width="1"/><path d="M8.400 0.600V3.800H11.600Z" fill="#4C96EA"/><path d="M3.400 6.700L8.700 12.600M8.700 6.700L3.400 12.600" fill="none" stroke="#FA0606" stroke-width="2.400"/></svg>
<div style="left:1088px;top:268px;width:70px;height:18px;background:#fff;border:1px solid #7F7F7F;box-sizing:border-box;"></div>
<span class="t" style="left:1095px;top:271px;width:60px;text-align:right;">20170000</span>
<span class="t" style="left:907.5px;top:292px;">01.2016-12.2016</span>
<svg style="left:1070px;top:290px;" width="14" height="16" viewBox="0 0 14 16"><path d="M0.500 0.500H8.700L11.600 3.400V14.300H0.500Z" fill="url(#dg2)" stroke="#8AA2DE"/><path d="M12.200 3.800V14.900H1.400" fill="none" stroke="#5C6890" stroke-width="1"/><path d="M8.400 0.600V3.800H11.600Z" fill="#4C96EA"/><path d="M3.400 6.700L8.700 12.600M8.700 6.700L3.400 12.600" fill="none" stroke="#FA0606" stroke-width="2.400"/></svg>
<div style="left:1088px;top:289px;width:70px;height:18px;background:#fff;border:1px solid #7F7F7F;box-sizing:border-box;"></div>
<span class="t" style="left:1095px;top:292px;width:60px;text-align:right;">20160000</span>
<span class="t" style="left:907.5px;top:313px;">01.2015-12.2015</span>
<svg style="left:1070px;top:311px;" width="14" height="16" viewBox="0 0 14 16"><path d="M0.500 0.500H8.700L11.600 3.400V14.300H0.500Z" fill="url(#dg2)" stroke="#8AA2DE"/><path d="M12.200 3.800V14.900H1.400" fill="none" stroke="#5C6890" stroke-width="1"/><path d="M8.400 0.600V3.800H11.600Z" fill="#4C96EA"/><path d="M3.400 6.700L8.700 12.600M8.700 6.700L3.400 12.600" fill="none" stroke="#FA0606" stroke-width="2.400"/></svg>
<div style="left:1088px;top:310px;width:70px;height:18px;background:#fff;border:1px solid #7F7F7F;box-sizing:border-box;"></div>
<span class="t" style="left:1095px;top:313px;width:60px;text-align:right;">20150004</span>
<span class="t" style="left:907.5px;top:334px;">01.2014-12.2014</span>
<svg style="left:1070px;top:332px;" width="14" height="16" viewBox="0 0 14 16"><path d="M0.500 0.500H8.700L11.600 3.400V14.300H0.500Z" fill="url(#dg2)" stroke="#8AA2DE"/><path d="M12.200 3.800V14.900H1.400" fill="none" stroke="#5C6890" stroke-width="1"/><path d="M8.400 0.600V3.800H11.600Z" fill="#4C96EA"/><path d="M3.400 6.700L8.700 12.600M8.700 6.700L3.400 12.600" fill="none" stroke="#FA0606" stroke-width="2.400"/></svg>
<div style="left:1088px;top:331px;width:70px;height:18px;background:#fff;border:1px solid #7F7F7F;box-sizing:border-box;"></div>
<span class="t" style="left:1095px;top:334px;width:60px;text-align:right;">20140003</span>
<span class="t" style="left:907.5px;top:355px;">01.2013-12.2013</span>
<svg style="left:1070px;top:353px;" width="14" height="16" viewBox="0 0 14 16"><path d="M0.500 0.500H8.700L11.600 3.400V14.300H0.500Z" fill="url(#dg2)" stroke="#8AA2DE"/><path d="M12.200 3.800V14.900H1.400" fill="none" stroke="#5C6890" stroke-width="1"/><path d="M8.400 0.600V3.800H11.600Z" fill="#4C96EA"/><path d="M3.400 6.700L8.700 12.600M8.700 6.700L3.400 12.600" fill="none" stroke="#FA0606" stroke-width="2.400"/></svg>
<div style="left:1088px;top:352px;width:70px;height:18px;background:#fff;border:1px solid #7F7F7F;box-sizing:border-box;"></div>
<span class="t" style="left:1095px;top:355px;width:60px;text-align:right;">20130002</span>
<span class="t" style="left:907.5px;top:376px;">01.2012-12.2012</span>
<svg style="left:1070px;top:374px;" width="14" height="16" viewBox="0 0 14 16"><path d="M0.500 0.500H8.700L11.600 3.400V14.300H0.500Z" fill="url(#dg2)" stroke="#8AA2DE"/><path d="M12.200 3.800V14.900H1.400" fill="none" stroke="#5C6890" stroke-width="1"/><path d="M8.400 0.600V3.800H11.600Z" fill="#4C96EA"/><path d="M3.400 6.700L8.700 12.600M8.700 6.700L3.400 12.600" fill="none" stroke="#FA0606" stroke-width="2.400"/></svg>
<div style="left:1088px;top:373px;width:70px;height:18px;background:#fff;border:1px solid #7F7F7F;box-sizing:border-box;"></div>
<span class="t" style="left:1095px;top:376px;width:60px;text-align:right;">20120005</span>
<span class="t" style="left:907.5px;top:397px;">01.2011-12.2011</span>
<svg style="left:1070px;top:395px;" width="14" height="16" viewBox="0 0 14 16"><path d="M0.500 0.500H8.700L11.600 3.400V14.300H0.500Z" fill="url(#dg2)" stroke="#8AA2DE"/><path d="M12.200 3.800V14.900H1.400" fill="none" stroke="#5C6890" stroke-width="1"/><path d="M8.400 0.600V3.800H11.600Z" fill="#4C96EA"/><path d="M3.400 6.700L8.700 12.600M8.700 6.700L3.400 12.600" fill="none" stroke="#FA0606" stroke-width="2.400"/></svg>
<div style="left:1088px;top:394px;width:70px;height:18px;background:#fff;border:1px solid #7F7F7F;box-sizing:border-box;"></div>
<span class="t" style="left:1095px;top:397px;width:60px;text-align:right;">20110000</span>
<span class="t" style="left:907.5px;top:418px;">Nicht angelegt</span>
<svg style="left:1070px;top:416px;" width="14" height="16" viewBox="0 0 14 16"><path d="M0.500 0.500H8.700L11.600 3.400V14.300H0.500Z" fill="url(#dg2)" stroke="#8AA2DE"/><path d="M12.200 3.800V14.900H1.400" fill="none" stroke="#5C6890" stroke-width="1"/><path d="M8.400 0.600V3.800H11.600Z" fill="#4C96EA"/><path d="M3.400 6.700L8.700 12.600M8.700 6.700L3.400 12.600" fill="none" stroke="#FA0606" stroke-width="2.400"/></svg>
<div style="left:1088px;top:415px;width:70px;height:18px;background:#fff;border:1px solid #7F7F7F;box-sizing:border-box;"></div>
<span class="t" style="left:907.5px;top:439px;">Nicht angelegt</span>
<svg style="left:1070px;top:437px;" width="14" height="16" viewBox="0 0 14 16"><path d="M0.500 0.500H8.700L11.600 3.400V14.300H0.500Z" fill="url(#dg2)" stroke="#8AA2DE"/><path d="M12.200 3.800V14.900H1.400" fill="none" stroke="#5C6890" stroke-width="1"/><path d="M8.400 0.600V3.800H11.600Z" fill="#4C96EA"/><path d="M3.400 6.700L8.700 12.600M8.700 6.700L3.400 12.600" fill="none" stroke="#FA0606" stroke-width="2.400"/></svg>
<div style="left:1088px;top:436px;width:70px;height:18px;background:#fff;border:1px solid #7F7F7F;box-sizing:border-box;"></div>
<span class="t" style="left:907px;top:502px;">Belegart/Gruppe</span>
<div style="left:997px;top:505px;width:5px;height:5px;background:#8A8A8A;"></div>
<span class="t" style="left:1012px;top:502px;">WA-Angebot</span>
<div style="left:966px;top:173px;width:172px;height:47px;background:#FDFCF9;border:1px solid #9A9A9A;box-sizing:border-box;box-shadow:inset 0 0 0 1px #fff;"></div>
<div style="left:969px;top:176px;width:24px;height:42px;background:#CCDFFB;"></div>
<div style="left:967px;top:176px;width:169px;height:22px;background:#FCE595;"></div>
<div style="left:969px;top:176px;width:24px;height:22px;background:#CACB98;"></div>
<span class="t" style="left:1004px;top:181px;letter-spacing:-0.27px;"><u>A</u>utomatische Erhöhung</span>
<span class="t" style="left:1004px;top:202px;">Löschen</span>
<span class="t" style="left:1107.5px;top:202px;">(F4)</span>
<svg style="left:972px;top:177px;" width="18" height="19" viewBox="0 0 18 19"><defs><linearGradient id="ta" x1="0" y1="0" x2="0" y2="1"><stop offset="0" stop-color="#8FB8A8"/><stop offset=".5" stop-color="#4F9FA8"/><stop offset="1" stop-color="#0E6E86"/></linearGradient></defs><path d="M6.4 2.200L11.700 8H8.600V16.600H4.200V8H1.100Z" fill="url(#ta)" stroke="#1A8CA6" stroke-width="1.100" stroke-linejoin="miter"/><path d="M8 11.300H10.400V8.900H12.800V11.300H15.200V13.700H12.800V16.100H10.400V13.700H8Z" fill="#7FE030" stroke="#1F8A12" stroke-width=".9"/></svg>
<svg style="left:973px;top:200px;" width="16" height="16" viewBox="0 0 16 16"><defs><radialGradient id="rx" cx=".4" cy=".3" r=".8"><stop offset="0" stop-color="#FF7A5A"/><stop offset="1" stop-color="#D81A08"/></radialGradient></defs><circle cx="7" cy="8" r="6" fill="url(#rx)" stroke="#C82A1A" stroke-width=".6"/><path d="M4.600 5.600L9.400 10.400M9.400 5.600L4.600 10.400" stroke="#fff" stroke-width="2" stroke-linecap="round"/></svg>
<svg style="left:1118px;top:170px;" width="92" height="38" viewBox="0 0 92 38"><defs><filter id="bl" x="-10%" y="-20%" width="120%" height="140%"><feGaussianBlur stdDeviation="0.800"/></filter></defs><g transform="translate(2,2)" opacity=".8" filter="url(#bl)"><path d="M4.900 17.500L26.800 5.200L26.700 14.300L79 16.200Q82.600 19.600 79 23L26.500 22.100L26.400 30.600Z" fill="#1A2A48"/></g><path d="M4.900 17.500L26.800 5.200L26.700 14.300L79 16.200Q82.600 19.600 79 23L26.500 22.100L26.400 30.600Z" fill="#008080"/></svg>
</div>
</body></html>
